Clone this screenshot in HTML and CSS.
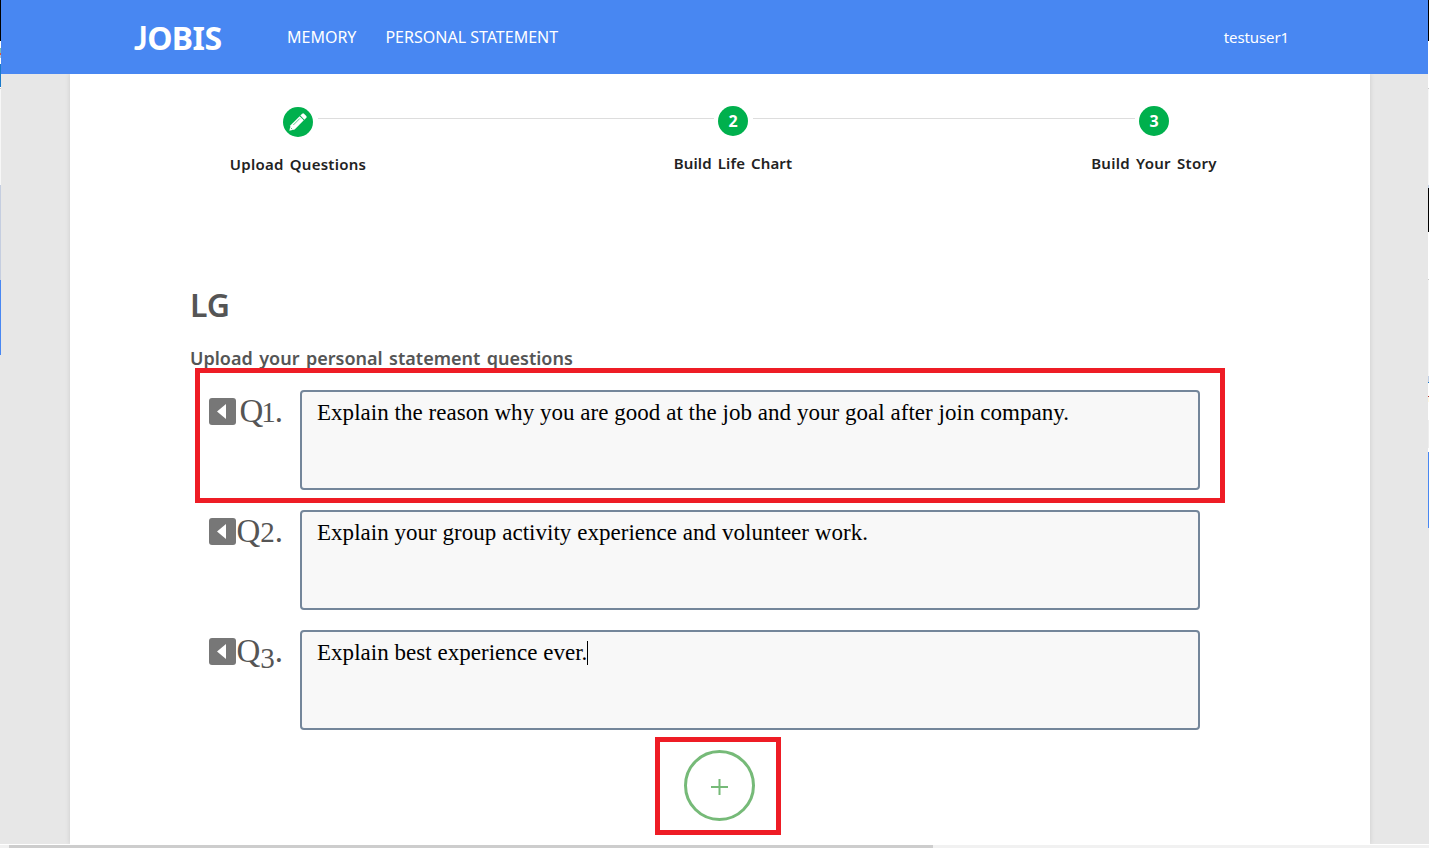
FILE: index.html
```html
<!DOCTYPE html>
<html lang="en">
<head>
<meta charset="utf-8">
<title>JOBIS</title>
<link rel="stylesheet" href="styles.css">
</head>
<body>
<div class="window">
  <div class="edge edge-left"></div>
  <div class="app">
    <header class="navbar">
      <div class="brand"><span class="brand-initial">J</span>OBIS</div>
      <nav class="nav">
        <span class="nav-memory">MEMORY</span>
        <span class="nav-statement">PERSONAL STATEMENT</span>
      </nav>
      <div class="user">testuser1</div>
    </header>
    <main class="page">
      <ol class="steps">
        <li class="step step-first">
          <span class="dot"><svg width="20" height="20" viewBox="0 0 18 18"><path d="M1.2 16.8 2.3 12 10.5 3.8 14.2 7.5 6 15.7Z" fill="#fff"/><path d="M11.1 3.2 12.8 1.5Q13.6.8 14.4 1.5L16.5 3.6Q17.2 4.4 16.5 5.2L14.8 6.9Z" fill="#fff"/><path d="M4.8 11.7 10.7 5.8M2.5 14.2 3.8 15.5" stroke="#00b04d" stroke-width=".6"/></svg></span>
          <span class="step-label label-upload">Upload Questions</span>
        </li>
        <li class="line line-one"></li>
        <li class="step">
          <span class="dot">2</span>
          <span class="step-label label-chart">Build Life Chart</span>
        </li>
        <li class="line line-two"></li>
        <li class="step">
          <span class="dot">3</span>
          <span class="step-label label-story">Build Your Story</span>
        </li>
      </ol>
      <h1 class="company">LG</h1>
      <h2 class="subtitle">Upload your personal statement questions</h2>
      <section class="questions">
        <div class="question">
          <svg class="remove" width="27" height="27" viewBox="0 0 27 27"><rect width="27" height="27" rx="3" fill="#777"/><path d="M17 6V21L8 13.5Z" fill="#fff"/></svg>
          <span class="number">Q<span class="digit digit-one">1</span>.</span>
          <div class="answer">Explain the reason why you are good at the job and your goal after join company.</div>
        </div>
        <div class="question">
          <svg class="remove" width="27" height="27" viewBox="0 0 27 27"><rect width="27" height="27" rx="3" fill="#777"/><path d="M17 6V21L8 13.5Z" fill="#fff"/></svg>
          <span class="number">Q<span class="digit">2</span>.</span>
          <div class="answer">Explain your group activity experience and volunteer work.</div>
        </div>
        <div class="question">
          <svg class="remove" width="27" height="27" viewBox="0 0 27 27"><rect width="27" height="27" rx="3" fill="#777"/><path d="M17 6V21L8 13.5Z" fill="#fff"/></svg>
          <span class="number">Q<span class="digit digit-low">3</span>.</span>
          <div class="answer">Explain best experience ever.<i class="caret"></i></div>
        </div>
      </section>
      <div class="add"><svg width="17" height="17" viewBox="0 0 17 17"><path d="M0 8H17M8.5 0V16" stroke="#76ba78" stroke-width="2"/></svg></div>
    </main>
    <div class="mark mark-question"></div>
    <div class="mark mark-add"></div>
  </div>
  <div class="edge edge-right"></div>
  <div class="scrollbar"><div class="thumb"></div></div>
</div>
</body>
</html>
```
FILE: styles.css
```css
* { box-sizing: border-box; }
body { margin: 0; overflow: hidden; font-family: "Noto Sans", "Open Sans", sans-serif; }
.window { display: grid; grid-template-columns: 1px 1427px 1px; grid-template-rows: 844px 4px; width: 1429px; height: 848px; background: #e7e7e7; }
.edge-left { background: linear-gradient(#000 0 41px, #fff 41px 48px, #7fb8b0 48px 53px, #e2553c 53px 55px, #a8c4d6 55px 58px, #fff 58px 64px, #1979ca 64px 87px, #fff 87px 88px, #ccc 88px 89px, #f7f7f7 89px 185px, #c5cee0 185px 280px, #4887f2 280px 355px, #e7e7e7 355px); }
.edge-right { background: linear-gradient(#000 0 41px, #fff 41px 88px, #ccc 88px 89px, #f7f7f7 89px 185px, #c5d3e8 185px 188px, #000 188px 232px, #fff 232px 279px, #ccc 279px 280px, #f7f7f7 280px 376px, #c0cfe5 376px 382px, #1979ca 382px 383px, #fff 383px 396px, #b83b32 396px 397px, #fff8e3 397px 402px, #fff 402px 420px, #eee 420px 448px, #fff 448px 452px, #4887f2 452px 528px, #e7e7e7 528px); }
.app { position: relative; display: flex; flex-direction: column; overflow: hidden; }
.navbar { position: relative; display: flex; width: 100%; height: 74px; flex: none; padding: 0 139px 0 133px; align-items: center; background: #4887f2; color: #fff; }
.brand { width: 153px; font-size: 32px; font-weight: 700; line-height: 74px; padding-top: 1px; letter-spacing: -.6px; white-space: nowrap; }
.brand-initial { font-family: Lato, sans-serif; }
.nav { display: flex; gap: 29px; flex: 1; font-size: 16px; }
.user { font-size: 15px; letter-spacing: -.1px; }
.page { width: 1300px; flex: 1; margin-left: 69px; padding: 32px 120px 0; background: #fff; box-shadow: 0 0 5px rgba(0,0,0,.12); }
.steps { display: flex; list-style: none; margin: 0 0 0 28px; padding: 0; width: 1012px; height: 78px; }
.step { display: flex; flex-direction: column; align-items: center; width: 160px; flex: none; }
.step-first { padding-top: 1px; }
.dot { display: flex; width: 30px; height: 30px; flex: none; align-items: center; justify-content: center; border-radius: 50%; background: #00b04d; color: #fff; font-size: 16px; font-weight: 700; }
.step-label { margin-top: 16px; font-size: 15px; font-weight: 600; line-height: 22px; color: #222; white-space: nowrap; word-spacing: 2px; }
.label-upload { letter-spacing: .25px; }
.label-chart { letter-spacing: .12px; }
.label-story { letter-spacing: .28px; }
.line { height: 1px; margin-top: 12px; background: #ddd; flex: none; }
.line-one { width: 396px; margin-left: -60px; margin-right: -61px; }
.line-two { width: 382px; margin-left: -60px; margin-right: -61px; }
.company { margin: 98px 0 0; font-size: 32px; font-weight: 600; line-height: 46px; color: #555; }
.subtitle { margin: 17px 0 0; font-size: 18px; font-weight: 600; line-height: 26px; color: #555; white-space: nowrap; word-spacing: 1.8px; }
.questions { display: flex; flex-direction: column; gap: 20px; margin: 19px 0 0 18px; font-family: "Liberation Serif", serif; }
.question { display: flex; height: 100px; }
.remove { flex: none; margin: 8px 0 0 1px; }
.number { width: 47px; margin-right: 17px; padding-top: 1px; text-align: right; font-size: 33px; line-height: 40px; color: #555; white-space: nowrap; }
.digit { font-size: 29px; }
.digit-one { margin: 0 -1px 0 -2px; }
.digit-low { position: relative; top: 6px; }
.answer { width: 900px; flex: none; padding: 7px 15px; border: 2px solid #74869a; border-radius: 4px; background: #f8f8f8; color: #000; font-size: 23px; letter-spacing: .03px; line-height: 28px; white-space: nowrap; }
.caret { display: inline-block; width: 1px; height: 24px; background: #000; vertical-align: -5px; }
.add { display: flex; align-items: center; justify-content: center; width: 71px; height: 71px; margin: 20px 0 0 494px; padding-top: 3px; border: 3px solid #76ba78; border-radius: 50%; }
.mark { position: absolute; border: 5px solid #ee1c25; }
.mark-question { left: 194px; top: 368px; width: 1030px; height: 135px; }
.mark-add { left: 654px; top: 737px; width: 126px; height: 98px; }
.scrollbar { grid-column: 1 / -1; padding-left: 9px; border-top: 1px solid #fff; background: #f1f1f1; }
.thumb { width: 924px; height: 3px; background: #cdcdcd; }
```
